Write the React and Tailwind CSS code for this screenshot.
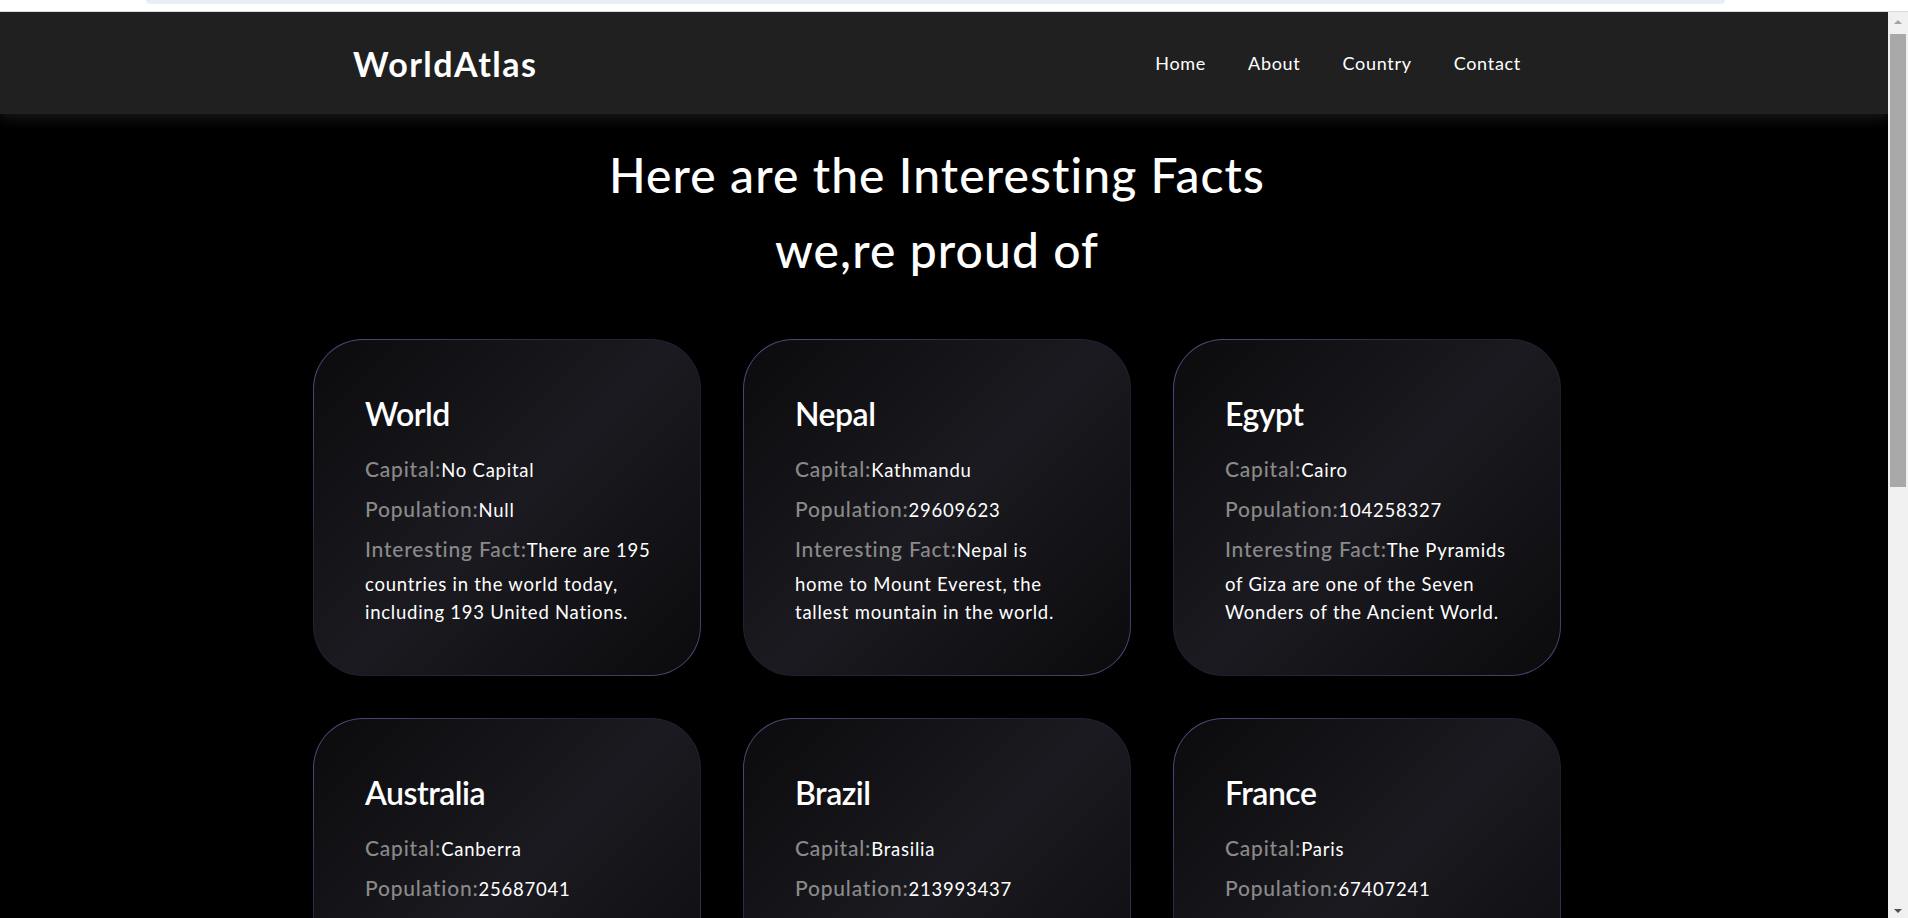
import React from "react";

const countries = [
  {
    name: "World",
    capital: "No Capital",
    population: "Null",
    fact: ["There are 195", "countries in the world today,", "including 193 United Nations."],
  },
  {
    name: "Nepal",
    capital: "Kathmandu",
    population: "29609623",
    fact: ["Nepal is", "home to Mount Everest, the", "tallest mountain in the world."],
  },
  {
    name: "Egypt",
    capital: "Cairo",
    population: "104258327",
    fact: ["The Pyramids", "of Giza are one of the Seven", "Wonders of the Ancient World."],
  },
  {
    name: "Australia",
    capital: "Canberra",
    population: "25687041",
    fact: ["Australia is", "home to the Great Barrier Reef,", "the largest coral reef system."],
  },
  {
    name: "Brazil",
    capital: "Brasilia",
    population: "213993437",
    fact: ["The Amazon", "Rainforest is the largest", "tropical rainforest on Earth."],
  },
  {
    name: "France",
    capital: "Paris",
    population: "67407241",
    fact: ["France is the", "most visited country in the", "world by international tourists."],
  },
];

function Label({ children }) {
  return (
    <span className="text-[21px] leading-[36px] tracking-[0.8px] font-medium text-[#8a8a8a]">
      {children}
    </span>
  );
}

function CountryCard({ country }) {
  return (
    <div className="rounded-[50px] p-px bg-[linear-gradient(140deg,#4c5383_0%,#22233a_35%,#1d1e2c_60%,#454b7a_100%)]">
      <div className="h-full rounded-[49px] bg-[linear-gradient(135deg,#0b0b0d_0%,#1b1a20_50%,#0b0b0d_100%)] px-[51px] pt-[55px] pb-[49px]">
        <h2 className="text-[32px] leading-[38px] font-semibold tracking-[-0.5px] text-white">
          {country.name}
        </h2>
        <div className="mt-[18px] flex flex-col gap-[4px] text-[18.5px] leading-[28px] tracking-[0.75px] text-white whitespace-nowrap">
          <p>
            <Label>Capital:</Label>
            {country.capital}
          </p>
          <p>
            <Label>Population:</Label>
            {country.population}
          </p>
          <p>
            <Label>Interesting Fact:</Label>
            {country.fact[0]}
            <span className="block mt-[3px]">
              {country.fact[1]}
              <br />
              {country.fact[2]}
            </span>
          </p>
        </div>
      </div>
    </div>
  );
}

export default function App() {
  return (
    <div className="h-[918px] overflow-hidden bg-black font-['Lato',sans-serif] flex flex-col">
      {/* browser strip */}
      <div className="h-[12px] shrink-0 bg-white border-b border-[#dcdcdc]">
        <div className="ml-[146px] w-[1579px] h-[4px] rounded-b-[4px] bg-[#e8edf6]" />
      </div>

      <div className="flex flex-1 min-h-0">
        <div className="flex-1 min-w-0 overflow-hidden bg-black">
          <header className="relative z-10 h-[102px] bg-[#202020] pr-[14px] shadow-[0_5px_12px_rgba(255,255,255,0.09)]">
            <div className="mx-auto w-[1168px] h-full flex items-center justify-between">
              <span className="text-[34px] font-bold tracking-[1.5px] text-white">WorldAtlas</span>
              <nav className="flex gap-[42px] text-[18px] tracking-[0.7px] text-white">
                <a>Home</a>
                <a>About</a>
                <a>Country</a>
                <a>Contact</a>
              </nav>
            </div>
          </header>

          <section className="pr-[14px]">
            <h1 className="mt-[23px] text-center text-[48px] leading-[75px] font-medium tracking-[1.1px] text-white">
              Here are the Interesting Facts
              <br />
              we,re proud of
            </h1>

            <div className="mx-auto mt-[52px] w-[1248px] grid grid-cols-3 gap-[42px]">
              {countries.map((c) => (
                <CountryCard key={c.name} country={c} />
              ))}
            </div>
          </section>
        </div>

        {/* scrollbar */}
        <div className="w-[20px] shrink-0 bg-[#f0f0f0] flex flex-col items-center">
          <div className="h-[20px] flex items-center justify-center">
            <div className="w-0 h-0 border-x-[4px] border-x-transparent border-b-[4px] border-b-[#a3a3a3]" />
          </div>
          <div className="mt-[2px] w-[16px] h-[453px] bg-[#a8a8a8]" />
          <div className="flex-1" />
          <div className="h-[14px] flex items-center justify-center">
            <div className="w-0 h-0 border-x-[4px] border-x-transparent border-t-[4px] border-t-[#505050]" />
          </div>
        </div>
      </div>
    </div>
  );
}
